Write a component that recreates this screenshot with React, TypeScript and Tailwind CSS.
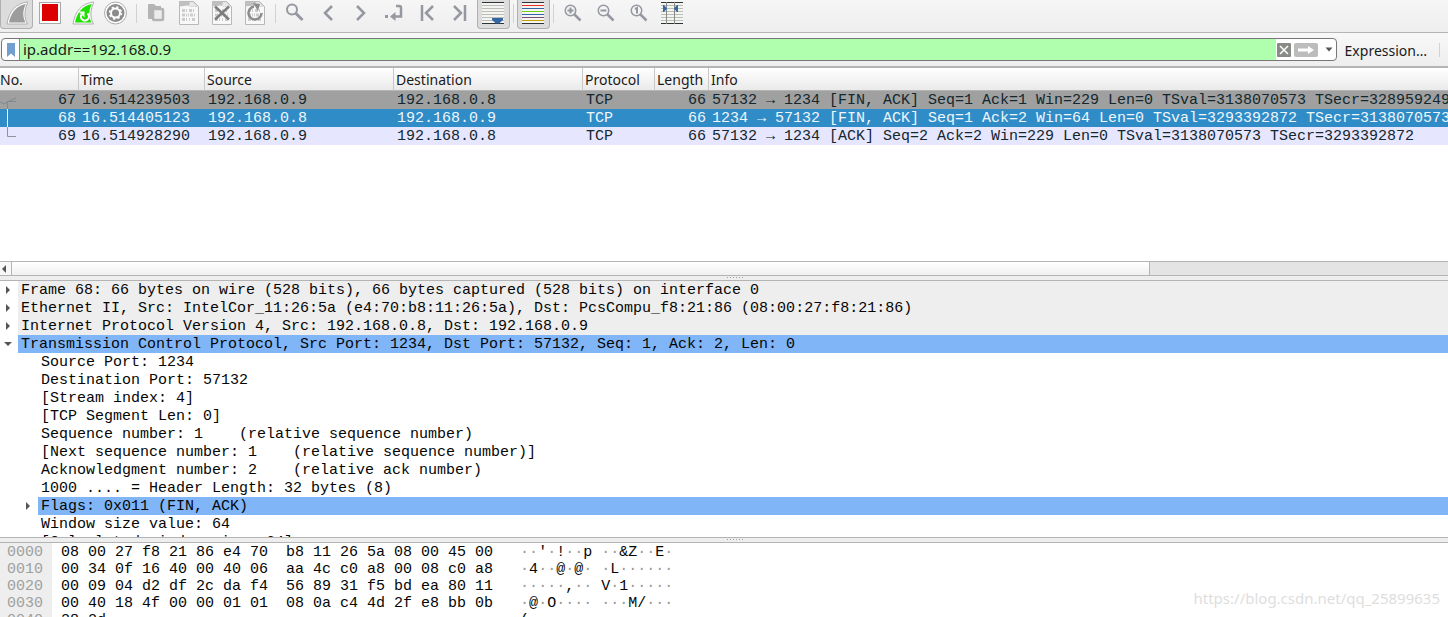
import { useState, type ReactNode } from 'react';

const GREY = '#9598a0';

function FinIcon({ fill, restart = false }: { fill: string; restart?: boolean }) {
  return (
    <svg width="24" height="24" viewBox="0 0 24 24">
      <path
        d="M24 1 C12 2 5 10 3 23 H23.5 C20 17 20 9 24 1 Z"
        fill="#fff"
        stroke="#b0b0b0"
        strokeWidth="1"
      />
      <path d="M22 3 C13 4.500 7 11 5 21.500 H21.500 C18.500 16 18.500 9 22 3 Z" fill={fill} />
      {restart && (
        <g fill="none" stroke="#fff" strokeWidth="2">
          <path d="M11.500 13.500 A4 4 0 1 0 17.500 12.500" />
          <path d="M8.500 10.500 H14.500 V16.500 Z" fill="#fff" stroke="none" />
        </g>
      )}
    </svg>
  );
}

function StopIcon() {
  return (
    <svg width="24" height="24" viewBox="0 0 24 24">
      <rect x="2.500" y="1.500" width="21" height="21" fill="#fff" stroke="#a8a8a8" />
      <rect x="5" y="3" width="16" height="17" fill="#dc0000" />
    </svg>
  );
}

function OptionsIcon() {
  return (
    <svg width="24" height="24" viewBox="0 0 24 24">
      <circle cx="12.500" cy="12" r="11" fill="#fff" stroke="#aaa" />
      <circle cx="12.500" cy="12" r="9" fill="#8c8c8c" />
      <circle cx="12.500" cy="12" r="4.500" fill="none" stroke="#fff" strokeWidth="2" />
      <circle
        cx="12.500"
        cy="12"
        r="6"
        fill="none"
        stroke="#fff"
        strokeWidth="1.500"
        strokeDasharray="2.356 2.356"
      />
    </svg>
  );
}

function FolderIcon() {
  return (
    <svg width="24" height="24" viewBox="0 0 24 24" fill="none">
      <path d="M4 4 Q4 3 5 3 H10 L12 5 H17 V8 H8 V18 H5 Q4 18 4 17 Z" fill="#b4b4b4" />
      <rect x="9" y="8" width="10" height="11" rx="1" fill="#ececec" stroke="#b4b4b4" strokeWidth="2.500" />
    </svg>
  );
}

function PageIcon({ overlay }: { overlay?: 'close' | 'reload' }) {
  return (
    <svg width="24" height="24" viewBox="0 0 24 24">
      <path d="M2.500 0.500 H16.500 L21.500 5.500 V23.500 H2.500 Z" fill="#f8f8f8" stroke="#b8b8b8" />
      <path d="M2.500 0.500 H16.500 L21.500 5.500 H13 L11 4.500 L2.500 5.500 Z" fill="#c0c0c0" />
      <path d="M13 1 L12 5 L20 5 L16 1 Z" fill="#e8e8e8" />
      <g stroke="#cccccc" strokeWidth="3" fill="none">
        <path d="M5 9.500 H19" strokeDasharray="3 1 1 2" />
        <path d="M5 14 H19" strokeDasharray="3 1 1 1 1 1" />
        <path d="M5 18.500 H19" strokeDasharray="3 1 1 2 1 2" />
      </g>
      {overlay === 'close' && (
        <path d="M5 5.500 L19 18.500 M19 5.500 L5 18.500" stroke="#7c7c7c" strokeWidth="2.500" />
      )}
      {overlay === 'reload' && (
        <g fill="none" stroke="#8c8c8c" strokeWidth="2.500">
          <path d="M11 5.500 A6.500 6.500 0 1 0 18.500 12" />
          <path d="M10 2 L17 3 L15 10 Z" fill="#8c8c8c" stroke="none" />
        </g>
      )}
    </svg>
  );
}

function LensIcon({ sign }: { sign?: 'plus' | 'minus' | 'one' }) {
  if (!sign) {
    return (
      <svg width="24" height="24" viewBox="0 0 24 24" fill="none" stroke={GREY} strokeWidth="2">
        <circle cx="9" cy="8.500" r="5" />
        <path d="M12.500 12 L19.500 19" strokeWidth="3" />
      </svg>
    );
  }
  return (
    <svg width="24" height="24" viewBox="0 0 24 24" fill="none" stroke={GREY} strokeWidth="1.500">
      <circle cx="9.500" cy="9.500" r="5.250" />
      <path d="M13 13 L19.500 19.500" strokeWidth="2.500" />
      {sign === 'plus' && <path d="M6.500 9.500 H12.500 M9.500 6.500 V12.500" strokeWidth="2" />}
      {sign === 'minus' && <path d="M6.500 9.500 H12.500" strokeWidth="2" />}
      {sign === 'one' && <path d="M8 8 L10 7 V12.500" strokeWidth="2" />}
    </svg>
  );
}

function StrokeIcon({ d, children }: { d: string; children?: ReactNode }) {
  return (
    <svg width="24" height="24" viewBox="0 0 24 24" fill="none" stroke={GREY} strokeWidth="2.500">
      <path d={d} />
      {children}
    </svg>
  );
}

function LinesIcon({ colors, children }: { colors: string[]; children?: ReactNode }) {
  return (
    <svg width="24" height="24" viewBox="0 0 24 24">
      <rect x="1" y="1" width="22" height="22" fill="#f4f4f2" />
      {colors.map((c, i) => (
        <rect key={i} x="1" y={1 + i * 3} width="22" height="1" fill={c} />
      ))}
      {children}
    </svg>
  );
}

const DARK = '#2e3436';
const PALE = '#babdb6';
const PLAIN_LINES = [DARK, PALE, PALE, PALE, PALE, PALE, PALE, DARK];
const COLOR_LINES = [DARK, '#ef2929', '#3465a4', '#73d216', '#3465a4', '#75507b', '#c4a000', DARK];

type Tool = { label: string; icon: ReactNode; pressed?: boolean } | null;

const TOOLS: Tool[] = [
  { label: 'Start capture', icon: <FinIcon fill="#9c9c9c" />, pressed: true },
  { label: 'Stop capture', icon: <StopIcon /> },
  { label: 'Restart capture', icon: <FinIcon fill="#1ee000" restart /> },
  { label: 'Capture options', icon: <OptionsIcon /> },
  null,
  { label: 'Open file', icon: <FolderIcon /> },
  { label: 'Save file', icon: <PageIcon /> },
  { label: 'Close file', icon: <PageIcon overlay="close" /> },
  { label: 'Reload file', icon: <PageIcon overlay="reload" /> },
  null,
  { label: 'Find packet', icon: <LensIcon /> },
  { label: 'Previous packet', icon: <StrokeIcon d="M16 5 L9 12 L16 19" /> },
  { label: 'Next packet', icon: <StrokeIcon d="M8 5 L15 12 L8 19" /> },
  {
    label: 'Go to packet',
    icon: (
      <StrokeIcon d="M14 5 H17 Q19 5 19 7 V15.500 H12">
        <path d="M8 15.500 L13.500 11 V20 Z" fill={GREY} stroke="none" />
        <rect x="3" y="14" width="3" height="3" fill={GREY} stroke="none" />
      </StrokeIcon>
    ),
  },
  { label: 'First packet', icon: <StrokeIcon d="M7 4 V20 M18 5 L11 12 L18 19" /> },
  { label: 'Last packet', icon: <StrokeIcon d="M17 4 V20 M6 5 L13 12 L6 19" /> },
  {
    label: 'Auto scroll',
    icon: (
      <LinesIcon colors={PLAIN_LINES}>
        <path d="M11 17 H22 V19 L18 22.500 H15 L11 19 Z" fill="#3465a4" />
      </LinesIcon>
    ),
    pressed: true,
  },
  null,
  { label: 'Colorize packets', icon: <LinesIcon colors={COLOR_LINES} />, pressed: true },
  null,
  { label: 'Zoom in', icon: <LensIcon sign="plus" /> },
  { label: 'Zoom out', icon: <LensIcon sign="minus" /> },
  { label: 'Normal size', icon: <LensIcon sign="one" /> },
  {
    label: 'Resize columns',
    icon: (
      <LinesIcon colors={PLAIN_LINES}>
        <path d="M6.500 1 V23 M14.500 1 V23" stroke="#888a85" />
        <path d="M3 4 H4 L7 7.500 L4 11 H3 Z M18 4 H17 L14 7.500 L17 11 H18 Z" fill="#3465a4" />
      </LinesIcon>
    ),
  },
];

function Toolbar() {
  return (
    <div className="flex shrink-0 items-start border-b border-[#b4b4b4] bg-linear-to-b from-[#f6f6f6] to-[#eeeeee] pb-[3px]">
      {TOOLS.map((tool, i) =>
        tool ? (
          <button
            key={tool.label}
            aria-label={tool.label}
            className={`h-[29px] w-[33px] shrink-0 rounded-b border-x border-b pt-px pb-[3px] pl-[3px] ${
              tool.pressed ? 'border-[#b0b0b0] bg-[#dcdcdc]' : 'border-transparent'
            }`}
          >
            {tool.icon}
          </button>
        ) : (
          <div
            key={i}
            className={`flex shrink-0 justify-center pt-1 ${i === 4 ? 'w-2' : 'w-[7px]'}`}
          >
            <div className="h-[19px] w-px bg-[#d2d2d2]" />
          </div>
        ),
      )}
    </div>
  );
}

function FilterBar() {
  const [filter, setFilter] = useState('ip.addr==192.168.0.9');

  return (
    <div className="flex h-[35px] shrink-0 items-center border-b-2 border-[#b4b4b4] bg-linear-to-b from-[#f8f8f8] to-[#eeeeee]">
      <div className="ml-px flex h-[23px] min-w-0 flex-1 items-stretch overflow-hidden rounded border border-[#777] bg-white">
        <button aria-label="Bookmark filter" className="flex w-[17px] items-center justify-center">
          <svg width="8" height="14" viewBox="0 0 8 14">
            <path d="M0 0 H8 V14 L4 10.500 L0 14 Z" fill="#729fcf" />
          </svg>
        </button>
        <input
          aria-label="Display filter"
          value={filter}
          onChange={(e) => setFilter(e.target.value)}
          className="min-w-0 flex-1 border-l border-[#888] bg-[#afffaf] pl-[3px] text-[15px] leading-[21px] outline-none"
        />
        <div className="flex items-center gap-[3px] pr-[3px] pl-px">
          <button aria-label="Clear filter" onClick={() => setFilter('')}>
            <svg width="14" height="14" viewBox="0 0 14 14" className="block">
              <rect width="14" height="14" rx="1" fill="#888a85" />
              <path d="M3 3 L11 11 M11 3 L3 11" stroke="#fff" strokeWidth="1.500" />
            </svg>
          </button>
          <button aria-label="Apply filter">
            <svg width="24" height="14" viewBox="0 0 24 14" className="block">
              <rect width="24" height="14" rx="2" fill="#bcbcbc" />
              <path d="M4 5.500 H14 V3 L20 7 L14 11 V8.500 H4 Z" fill="#fff" />
            </svg>
          </button>
          <button aria-label="Recent filters" className="ml-1">
            <svg width="8" height="5" viewBox="0 0 8 5" className="block">
              <path d="M0.500 0.500 H7.500 L4 4.500 Z" fill="#555" />
            </svg>
          </button>
        </div>
      </div>
      <button className="ml-2 pt-[2px] text-sm">Expression…</button>
      <div className="mr-2 ml-3 h-[14px] w-px bg-[#d2d2d2]" />
    </div>
  );
}

const COLUMNS = [
  { name: 'No.', width: 'w-[79px]' },
  { name: 'Time', width: 'w-[126px]' },
  { name: 'Source', width: 'w-[189px]' },
  { name: 'Destination', width: 'w-[189px]' },
  { name: 'Protocol', width: 'w-[72px]' },
  { name: 'Length', width: 'w-[54px]' },
  { name: 'Info', width: '' },
];

const PACKETS = [
  {
    no: 67,
    time: '16.514239503',
    source: '192.168.0.9',
    destination: '192.168.0.8',
    length: 66,
    info: '57132 → 1234 [FIN, ACK] Seq=1 Ack=1 Win=229 Len=0 TSval=3138070573 TSecr=3289592498',
    row: 'bg-[#a0a0a0] text-[#12272e]',
    mark: <path d="M0 11 L4 13 L7 11 L16 7 M7.500 18 V10.500 H16" stroke="#7d8b90" fill="none" />,
  },
  {
    no: 68,
    time: '16.514405123',
    source: '192.168.0.8',
    destination: '192.168.0.9',
    length: 66,
    info: '1234 → 57132 [FIN, ACK] Seq=1 Ack=2 Win=64 Len=0 TSval=3293392872 TSecr=3138070573',
    row: 'bg-[#308cc6] text-[#eef6fb]',
    mark: <path d="M7.500 0 V18" stroke="#fff" />,
  },
  {
    no: 69,
    time: '16.514928290',
    source: '192.168.0.9',
    destination: '192.168.0.8',
    length: 66,
    info: '57132 → 1234 [ACK] Seq=2 Ack=2 Win=229 Len=0 TSval=3138070573 TSecr=3293392872',
    row: 'bg-[#e7e6ff] text-[#12272e]',
    mark: <path d="M7.500 0 V9.500 H16" stroke="#8f959c" fill="none" />,
  },
];

function PacketList() {
  return (
    <div className="flex h-[207px] shrink-0 flex-col bg-white">
      <div className="min-h-0 flex-1 overflow-hidden">
        <table className="w-full table-fixed border-separate border-spacing-0">
          <thead>
            <tr className="h-[23px]">
              {COLUMNS.map((col, i) => (
                <th
                  key={col.name}
                  className={`border-b border-[#b4b4b4] bg-linear-to-b from-white to-[#eaeaea] p-0 pt-[2px] text-left text-sm leading-5 font-normal ${col.width} ${
                    i < 6 ? 'border-r border-r-[#c8c8c8]' : ''
                  } ${i > 0 ? 'pl-[2px]' : ''}`}
                >
                  {col.name}
                </th>
              ))}
            </tr>
          </thead>
          <tbody className="font-['Liberation_Mono',monospace] text-[15px] leading-[17px] whitespace-nowrap">
            {PACKETS.map((p) => (
              <tr key={p.no} className={p.row}>
                <td className="p-0 pr-[3px]">
                  <div className="flex justify-between">
                    <svg width="18" height="18" viewBox="0 0 18 18">
                      {p.mark}
                    </svg>
                    <span className="pt-px">{p.no}</span>
                  </div>
                </td>
                <td className="p-0 pt-px pl-[3px]">{p.time}</td>
                <td className="p-0 pt-px pl-[3px]">{p.source}</td>
                <td className="p-0 pt-px pl-[3px]">{p.destination}</td>
                <td className="p-0 pt-px pl-[3px]">TCP</td>
                <td className="p-0 pt-px pr-[3px] text-right">{p.length}</td>
                <td className="overflow-hidden p-0 pt-px pl-[3px]">{p.info}</td>
              </tr>
            ))}
          </tbody>
        </table>
      </div>
      <div className="flex h-[14px] border-t border-[#b4b4b4] bg-[#e4e4e4]">
        <button
          aria-label="Scroll left"
          className="flex w-3 items-center border-r border-[#b4b4b4] bg-[#f8f8f8] pl-px"
        >
          <svg width="6" height="8" viewBox="0 0 6 8">
            <path d="M5 0 V8 L1 4 Z" fill="#555" />
          </svg>
        </button>
        <div className="w-[78.6%] border-r border-[#b4b4b4] bg-linear-to-b from-white to-[#f0f0f0]" />
      </div>
    </div>
  );
}

function Splitter() {
  return (
    <div className="flex h-[6px] shrink-0 items-start justify-center gap-[2px] border-y border-[#b4b4b4] bg-[#eeeeee] pt-px pl-[22px]">
      {Array.from({ length: 6 }, (_, i) => (
        <div key={i} className="size-px bg-[#a0a0a0]" />
      ))}
    </div>
  );
}

type Field = { text: string; level?: number; state?: 'open' | 'closed'; tone?: string };

const FIELDS: Field[] = [
  {
    text: 'Frame 68: 66 bytes on wire (528 bits), 66 bytes captured (528 bits) on interface 0',
    state: 'closed',
    tone: 'bg-[#eeeeee]',
  },
  {
    text: 'Ethernet II, Src: IntelCor_11:26:5a (e4:70:b8:11:26:5a), Dst: PcsCompu_f8:21:86 (08:00:27:f8:21:86)',
    state: 'closed',
    tone: 'bg-[#eeeeee]',
  },
  {
    text: 'Internet Protocol Version 4, Src: 192.168.0.8, Dst: 192.168.0.9',
    state: 'closed',
    tone: 'bg-[#eeeeee]',
  },
  {
    text: 'Transmission Control Protocol, Src Port: 1234, Dst Port: 57132, Seq: 1, Ack: 2, Len: 0',
    state: 'open',
    tone: 'bg-[#80b5f8]',
  },
  { text: 'Source Port: 1234', level: 1 },
  { text: 'Destination Port: 57132', level: 1 },
  { text: '[Stream index: 4]', level: 1 },
  { text: '[TCP Segment Len: 0]', level: 1 },
  { text: 'Sequence number: 1    (relative sequence number)', level: 1 },
  { text: '[Next sequence number: 1    (relative sequence number)]', level: 1 },
  { text: 'Acknowledgment number: 2    (relative ack number)', level: 1 },
  { text: '1000 .... = Header Length: 32 bytes (8)', level: 1 },
  { text: 'Flags: 0x011 (FIN, ACK)', level: 1, state: 'closed', tone: 'bg-[#80b5f8]' },
  { text: 'Window size value: 64', level: 1 },
  { text: '[Calculated window size: 64]', level: 1 },
];

function PacketDetails() {
  return (
    <ul className="h-64 shrink-0 overflow-hidden bg-white font-['Liberation_Mono',monospace] text-[15px] leading-[17px] text-[#060606]">
      {FIELDS.map((f) => (
        <li key={f.text} className={`flex ${f.level ? 'pl-5' : ''}`}>
          {f.state ? (
            <button
              aria-label={f.state === 'open' ? 'Collapse' : 'Expand'}
              className="flex w-[18px] shrink-0 items-center pl-1"
            >
              <svg width="8" height="8" viewBox="0 0 8 8">
                <path d={f.state === 'open' ? 'M0 2 H8 L4 6 Z' : 'M2 0 V8 L6 4 Z'} fill="#555" />
              </svg>
            </button>
          ) : (
            <div className="w-[18px] shrink-0" />
          )}
          <span className={`flex-1 pt-px pl-[3px] whitespace-pre ${f.tone ?? ''}`}>{f.text}</span>
        </li>
      ))}
    </ul>
  );
}

const BYTES = [
  '08 00 27 f8 21 86 e4 70 b8 11 26 5a 08 00 45 00',
  '00 34 0f 16 40 00 40 06 aa 4c c0 a8 00 08 c0 a8',
  '00 09 04 d2 df 2c da f4 56 89 31 f5 bd ea 80 11',
  '00 40 18 4f 00 00 01 01 08 0a c4 4d 2f e8 bb 0b',
  '28 2d',
].map((line) => line.split(' '));

function AsciiCell({ bytes }: { bytes: string[] }) {
  return (
    <>
      {bytes.map((b, i) => {
        const code = parseInt(b, 16);
        const printable = code > 32 && code < 127;
        return (
          <span key={i} className={printable ? '' : 'text-[#999]'}>
            {i === 8 ? ' ' : ''}
            {printable ? String.fromCharCode(code) : '·'}
          </span>
        );
      })}
    </>
  );
}

function HexDump() {
  return (
    <div className="min-h-0 flex-1 overflow-hidden bg-white">
      <table className="border-separate border-spacing-0 font-['Liberation_Mono',monospace] text-[15px] leading-[15px] whitespace-pre text-[#060606]">
        <tbody>
          {BYTES.map((row, i) => (
            <tr key={i}>
              <td className="w-[52px] bg-[#eeeeee] p-0 pt-[2px] pr-[9px] pl-[7px] text-[#a0a0a0]">
                {(i * 16).toString(16).padStart(4, '0')}
              </td>
              <td className="p-0 pt-[2px] pl-[9px]">
                {row.slice(0, 8).join(' ') + '  ' + row.slice(8).join(' ')}
              </td>
              <td className="p-0 pt-[2px] pl-[27px]">
                <AsciiCell bytes={row} />
              </td>
            </tr>
          ))}
        </tbody>
      </table>
    </div>
  );
}

export default function App() {
  return (
    <div className="relative flex h-screen flex-col overflow-hidden bg-[#eeeeee] font-['Noto_Sans',sans-serif] text-[#1a1a1a]">
      <Toolbar />
      <FilterBar />
      <PacketList />
      <Splitter />
      <PacketDetails />
      <Splitter />
      <HexDump />
      <p className="absolute right-2 bottom-2 text-[15px] text-[#dedede]">
        https://blog.csdn.net/qq_25899635
      </p>
    </div>
  );
}
